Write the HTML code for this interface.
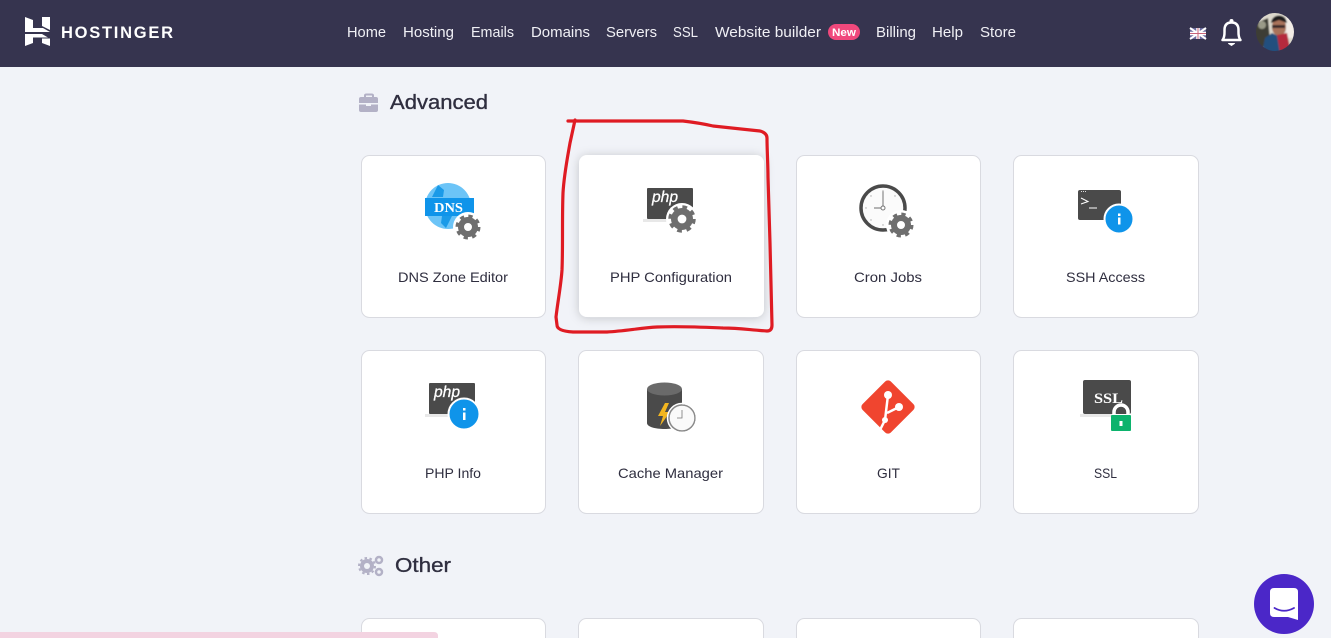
<!DOCTYPE html>
<html><head><meta charset="utf-8"><style>
html,body{margin:0;padding:0;width:1331px;height:638px;overflow:hidden;background:#f1f3f8}
svg{display:block;position:absolute;left:0;top:0}
text{font-family:"Liberation Sans",sans-serif}
.n{font-size:15px;fill:#f0f0f5}
.l{font-size:14px;fill:#2f2e3f}
.c{fill:#fff;stroke:#d9dae0;stroke-width:1}
</style></head><body>
<svg width="1331" height="638" viewBox="0 0 1331 638" xmlns="http://www.w3.org/2000/svg">
<defs>
<filter id="sh" x="-20%" y="-20%" width="140%" height="140%"><feDropShadow dx="0" dy="1" stdDeviation="5" flood-color="#1d1e20" flood-opacity=".2"/></filter>
<filter id="bl"><feGaussianBlur stdDeviation=".8"/></filter>
<g id="gear"><circle r="7" fill="none" stroke="#6e6e6e" stroke-width="6"/><circle r="10.500" fill="none" stroke="#6e6e6e" stroke-width="4" stroke-dasharray="4.100 4.150"/></g>
</defs>
<!-- header -->
<rect width="1331" height="67" fill="#36344f"/>
<g fill="#fff">
<path d="M25 17 33 20V28H43L50 32H25Z"/><path d="M42 17H50V30L42 26Z"/>
<path d="M25 34H42L48 37.500H33V43L25 46Z"/><path d="M42 38.500H50V46L42 43Z"/>
</g>
<text x="61" y="38" font-size="16.500" font-weight="bold" fill="#fff" textLength="112" lengthAdjust="spacing">HOSTINGER</text>
<text class="n" x="347" y="37" textLength="39" lengthAdjust="spacingAndGlyphs">Home</text>
<text class="n" x="403" y="37" textLength="51" lengthAdjust="spacingAndGlyphs">Hosting</text>
<text class="n" x="471" y="37" textLength="43" lengthAdjust="spacingAndGlyphs">Emails</text>
<text class="n" x="531" y="37" textLength="59" lengthAdjust="spacingAndGlyphs">Domains</text>
<text class="n" x="606" y="37" textLength="51" lengthAdjust="spacingAndGlyphs">Servers</text>
<text class="n" x="673" y="37" textLength="25" lengthAdjust="spacingAndGlyphs">SSL</text>
<text class="n" x="715" y="37" textLength="106" lengthAdjust="spacingAndGlyphs">Website builder</text>
<rect x="828" y="24" width="32" height="16" rx="8" fill="#f0487c"/>
<text x="832" y="36" font-size="11" font-weight="bold" fill="#fff" textLength="24" lengthAdjust="spacingAndGlyphs">New</text>
<text class="n" x="876" y="37" textLength="40" lengthAdjust="spacingAndGlyphs">Billing</text>
<text class="n" x="932" y="37" textLength="31" lengthAdjust="spacingAndGlyphs">Help</text>
<text class="n" x="980" y="37" textLength="36" lengthAdjust="spacingAndGlyphs">Store</text>
<!-- flag -->
<rect x="1190" y="28" width="16" height="11" fill="#6a6a9c"/>
<path d="M1190 28 1206 39M1206 28 1190 39" stroke="#fff" stroke-width="2"/>
<path d="M1198 28V39M1190 33.500H1206" stroke="#fff" stroke-width="3.500"/>
<path d="M1198 28V39M1190 33.500H1206" stroke="#c9657a" stroke-width="1"/>
<!-- bell -->
<path d="M1222.500 40C1225 37 1224.500 33 1224.500 30C1224.500 25 1227 22.500 1231.500 22.500C1236 22.500 1238.500 25 1238.500 30C1238.500 33 1238 37 1240.500 40Z" fill="none" stroke="#fff" stroke-width="2.500" stroke-linejoin="round"/>
<circle cx="1231.500" cy="21" r="2" fill="#fff"/><path d="M1228.500 43.500H1234.500L1231.500 45.500Z" fill="#fff" stroke="#fff" stroke-linejoin="round"/>
<!-- avatar -->
<clipPath id="av"><circle cx="1275" cy="32" r="19"/></clipPath>
<g clip-path="url(#av)"><g filter="url(#bl)">
<rect x="1254" y="11" width="42" height="42" fill="#dcd8cc"/>
<path d="M1254 24 1268 18 1270 40 1262 48 1254 44Z" fill="#3c3c34"/>
<circle cx="1262" cy="25" r="4" fill="#9a9a88"/>
<rect x="1286" y="14" width="10" height="24" fill="#f2ece6"/>
<ellipse cx="1279" cy="27" rx="7" ry="9" fill="#a9725a"/>
<path d="M1271 23C1272 13 1286 13 1287 23L1279 20Z" fill="#1f1a1a"/>
<rect x="1272" y="25" width="13" height="3" fill="#3a2c2a"/>
<path d="M1272 33 1265 38 1262 53H1280L1278 36Z" fill="#24507e"/>
<path d="M1277 35 1287 33 1291 53H1280Z" fill="#b52c3c"/>
</g></g>
<!-- Advanced heading -->
<path d="M359 99Q359 97 361 97H376Q378 97 378 99V103H359ZM359 104.500H366V106H371V104.500H378V110Q378 112 376 112H361Q359 112 359 110Z" fill="#b3b1c6"/>
<path d="M365 97V95.500Q365 94.500 366.500 94.500H371.500Q373 94.500 373 95.500V97" fill="none" stroke="#b3b1c6" stroke-width="2"/>
<text x="390" y="109" font-size="20.500" fill="#2f2e3f" stroke="#2f2e3f" stroke-width=".35" textLength="98" lengthAdjust="spacingAndGlyphs">Advanced</text>
<!-- cards -->
<rect class="c" x="361.500" y="155.500" width="184" height="162" rx="8"/>
<rect x="579" y="155" width="185" height="162" rx="8" fill="#fff" filter="url(#sh)"/>
<rect class="c" x="796.500" y="155.500" width="184" height="162" rx="8"/>
<rect class="c" x="1013.500" y="155.500" width="185" height="162" rx="8"/>
<rect class="c" x="361.500" y="350.500" width="184" height="163" rx="8"/>
<rect class="c" x="578.500" y="350.500" width="185" height="163" rx="8"/>
<rect class="c" x="796.500" y="350.500" width="184" height="163" rx="8"/>
<rect class="c" x="1013.500" y="350.500" width="185" height="163" rx="8"/>
<rect class="c" x="361.500" y="618.500" width="184" height="40" rx="8"/>
<rect class="c" x="578.500" y="618.500" width="185" height="40" rx="8"/>
<rect class="c" x="796.500" y="618.500" width="184" height="40" rx="8"/>
<rect class="c" x="1013.500" y="618.500" width="185" height="40" rx="8"/>
<!-- labels -->
<text class="l" x="398" y="282" textLength="110" lengthAdjust="spacingAndGlyphs">DNS Zone Editor</text>
<text class="l" x="610" y="282" textLength="122" lengthAdjust="spacingAndGlyphs">PHP Configuration</text>
<text class="l" x="854" y="282" textLength="68" lengthAdjust="spacingAndGlyphs">Cron Jobs</text>
<text class="l" x="1066" y="282" textLength="79" lengthAdjust="spacingAndGlyphs">SSH Access</text>
<text class="l" x="425" y="478" textLength="56" lengthAdjust="spacingAndGlyphs">PHP Info</text>
<text class="l" x="618" y="478" textLength="105" lengthAdjust="spacingAndGlyphs">Cache Manager</text>
<text class="l" x="877" y="478" textLength="23" lengthAdjust="spacingAndGlyphs">GIT</text>
<text class="l" x="1094" y="478" textLength="23" lengthAdjust="spacingAndGlyphs">SSL</text>
<!-- DNS -->
<circle cx="448" cy="206" r="23" fill="#6cc4f7"/>
<path d="M438 185 444 190 443 197H432ZM442 216H452L446 228 441 223Z" fill="#1a9ae8"/>
<rect x="425" y="198" width="49" height="18" fill="#0f94ea"/>
<text x="434" y="212" font-size="13.500" font-weight="bold" fill="#fff" style="font-family:'Liberation Serif',serif" textLength="29" lengthAdjust="spacingAndGlyphs">DNS</text>
<circle cx="468" cy="227" r="15" fill="#fff"/>
<use href="#gear" x="468" y="227"/>
<!-- PHP config -->
<rect x="643" y="219" width="30" height="3" fill="#e8e8e8"/>
<rect x="647" y="188" width="46" height="31" rx="1" fill="#4a4a4a"/>
<text x="652" y="202" font-size="16" font-style="italic" fill="#fff" stroke="#fff" stroke-width=".3" textLength="26" lengthAdjust="spacingAndGlyphs">php</text>
<circle cx="682" cy="219" r="16" fill="#fff"/>
<use href="#gear" transform="translate(682 219) scale(1.100)"/>
<!-- Cron -->
<circle cx="883" cy="208" r="22" fill="#fbfbfb" stroke="#4a4a4a" stroke-width="3.500"/>
<path d="M883 191V208M874 208H883" stroke="#8a8a8a" stroke-width="1.200" fill="none"/>
<circle cx="883" cy="208" r="2" fill="#fff" stroke="#777"/>
<g fill="#aaa"><circle cx="883" cy="191" r=".7"/><circle cx="871" cy="196" r=".7"/><circle cx="895" cy="196" r=".7"/><circle cx="866" cy="208" r=".7"/><circle cx="871" cy="220" r=".7"/><circle cx="883" cy="225" r=".7"/></g>
<circle cx="901" cy="225" r="15" fill="#fff"/>
<use href="#gear" x="901" y="225"/>
<!-- SSH -->
<rect x="1078" y="190" width="43" height="30" rx="2" fill="#4a4a4a"/>
<path d="M1081 191.500H1087" stroke="#ddd" stroke-width="1" stroke-dasharray="1 1"/>
<path d="M1081 198 1088 201.500 1081 204M1089 208H1097" fill="none" stroke="#fff" stroke-width="1"/>
<circle cx="1119" cy="219" r="14.500" fill="#0f94ea" stroke="#fff" stroke-width="2"/>
<rect x="1118" y="217.500" width="2.500" height="7" fill="#fff"/><rect x="1118" y="213.500" width="2.500" height="2.500" fill="#fff"/>
<!-- PHP info -->
<rect x="425" y="414" width="30" height="3" fill="#e8e8e8"/>
<rect x="429" y="383" width="46" height="31" rx="1" fill="#4a4a4a"/>
<text x="434" y="397" font-size="16" font-style="italic" fill="#fff" stroke="#fff" stroke-width=".3" textLength="26" lengthAdjust="spacingAndGlyphs">php</text>
<circle cx="464" cy="414" r="15.500" fill="#0f94ea" stroke="#fff" stroke-width="2"/>
<rect x="463" y="412.500" width="2.500" height="7.500" fill="#fff"/><rect x="463" y="408" width="2.500" height="2.500" fill="#fff"/>
<!-- Cache -->
<path d="M647 389V423C647 431 682 431 682 423V389Z" fill="#4a4a4a"/>
<ellipse cx="664.500" cy="389" rx="17.500" ry="6.500" fill="#6a6a6a"/>
<path d="M665 403 658 416H663L660 426 670 412H665L669 403Z" fill="#f3b61f"/>
<circle cx="682" cy="418" r="13" fill="#fafafa" stroke="#8a8a8a" stroke-width="1.500"/>
<circle cx="682" cy="418" r="14.500" fill="none" stroke="#fff" stroke-width="1.500"/>
<path d="M682 410V418H677" stroke="#777" stroke-width=".8" fill="none"/>
<!-- GIT -->
<rect x="868" y="387" width="40" height="40" rx="4" transform="rotate(45 888 407)" fill="#f0452f"/>
<path d="M888 395 885 420 880 430M887 413 899 407" stroke="#fff" stroke-width="2.500" fill="none"/>
<circle cx="888" cy="395" r="4" fill="#fff"/><circle cx="899" cy="407" r="4" fill="#fff"/><circle cx="885" cy="420" r="3" fill="#fff"/>
<!-- SSL -->
<rect x="1080" y="414" width="32" height="3" fill="#e8e8e8"/>
<rect x="1083" y="380" width="48" height="34" rx="2" fill="#4a4a4a"/>
<text x="1094" y="403" font-size="14.500" font-weight="bold" fill="#fff" style="font-family:'Liberation Serif',serif" textLength="29" lengthAdjust="spacingAndGlyphs">SSL</text>
<path d="M1114 416V412A7 7 0 0 1 1128 412V416" fill="none" stroke="#fff" stroke-width="3.500"/>
<rect x="1111" y="415" width="20" height="16" rx="1" fill="#0cb36d"/>
<rect x="1119.500" y="421" width="3" height="5" fill="#fff"/>
<!-- Other heading -->
<circle cx="367" cy="566" r="7" fill="#b3b1c6"/><circle cx="367" cy="566" r="3" fill="#f1f3f8"/>
<circle cx="367" cy="566" r="8" fill="none" stroke="#b3b1c6" stroke-width="2" stroke-dasharray="2.500 2.500"/>
<circle cx="379" cy="560" r="3" fill="none" stroke="#b3b1c6" stroke-width="2.500"/>
<circle cx="379" cy="572" r="3" fill="none" stroke="#b3b1c6" stroke-width="2.500"/>
<text x="395" y="572" font-size="20.500" fill="#2f2e3f" stroke="#2f2e3f" stroke-width=".35" textLength="56" lengthAdjust="spacingAndGlyphs">Other</text>
<!-- pink bar -->
<path d="M0 632H434Q438 632 438 636V638H0Z" fill="#f3d3e1"/>
<!-- chat -->
<circle cx="1284" cy="604" r="30" fill="#4b27c8"/>
<path d="M1274 588H1294Q1298 588 1298 592V620L1288 617H1274Q1270 617 1270 613V592Q1270 588 1274 588Z" fill="#fff"/>
<path d="M1274.500 608Q1284 613.500 1294 608" fill="none" stroke="#4b27c8" stroke-width="1.800" stroke-linecap="round"/>
<!-- red annotation -->
<path d="M568 121H577L683 121Q700 123 713 126L760 131Q767 133 767 138C767 150 768 165 768 177L770 243L772 325Q772 331 767 331C750 330 740 328 723 328C700 327 680 326 657 327C640 328 625 331 607 332L573 332Q557 331 557 325L556 317C558 300 561 285 562 270C563 245 562 220 563 193C564 175 567 160 570 143L575 120" fill="none" stroke="#df1b23" stroke-width="3.200" stroke-linecap="round" stroke-linejoin="round"/>
</svg>
</body></html>
